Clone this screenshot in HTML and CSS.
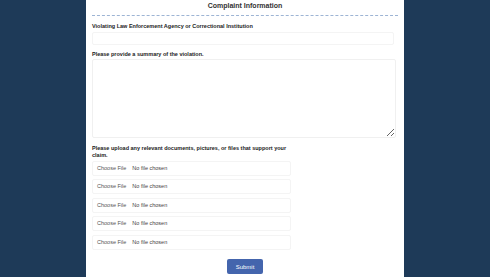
FILE: index.html
```html
<!DOCTYPE html>
<html lang="en">
  <head>
    <meta charset="UTF-8" />
    <meta name="viewport" content="width=device-width, initial-scale=1.0" />
    <title>Complaint Information</title>
    <link rel="stylesheet" href="styles.css">
  </head>
  <body>
    <div class="panel">
      <form id="complaintForm">
        <h3 class="section-title">Complaint Information</h3>

        <div class="field first">
          <label for="agency">Violating Law Enforcement Agency or Correctional Institution</label>
          <input type="text" id="agency" />
        </div>

        <div class="field summary">
          <label for="summary">Please provide a summary of the violation.</label>
          <textarea id="summary"></textarea>
        </div>

        <div class="field uploads">
          <label>Please upload any relevant documents, pictures, or files that support your claim.</label>
          <input type="file" class="file" />
          <input type="file" class="file" />
          <input type="file" class="file" />
          <input type="file" class="file" />
          <input type="file" class="file" />
        </div>

        <div class="actions">
          <button type="submit">Submit</button>
        </div>
      </form>
    </div>
  </body>
</html>
```

FILE: styles.css
```css
body {
  margin: 0;
  font-family: "Liberation Sans", Arial, sans-serif;
  background-color: #1e3a58;
}
.panel {
  width: 306px;
  margin: 0 auto;
  padding: 0 6px 3px;
  background-color: #fff;
  color: #222;
}
.section-title {
  margin: 0;
  padding: 2px 0 5px;
  font-size: 7px;
  line-height: 8px;
  text-align: center;
  color: #333;
  border-bottom: 1px dashed #9db4d4;
}
.field {
  margin-top: 7px;
}
.field label {
  display: block;
  font-size: 5.5px;
  font-weight: bold;
  line-height: 7px;
  margin-bottom: 2px;
}
.summary {
  margin-top: 5.5px;
}
.summary label {
  margin-bottom: 1px;
}
.field input[type="text"] {
  display: block;
  box-sizing: border-box;
  width: 302px;
  height: 13px;
  margin: 0;
  border: 1px solid #f4f4f4;
  border-radius: 2px;
}
.field textarea {
  display: block;
  box-sizing: border-box;
  width: 304px;
  height: 79px;
  border: 1px solid #f0f0f0;
  border-radius: 2px;
}
.uploads {
  width: 200px;
}
.file {
  display: block;
  box-sizing: border-box;
  width: 199px;
  height: 15px;
  margin: 0 0 3.5px;
  padding: 0 2px;
  border: 1px solid #f4f4f4;
  border-radius: 2px;
  font-family: "Liberation Sans", Arial, sans-serif;
  font-size: 5.5px;
  line-height: 13px;
  color: #444;
}
.file::file-selector-button {
  background: none;
  border: none;
  padding: 0 2px;
  margin-right: 4px;
  font-size: 5.5px;
  color: #555;
}
.actions {
  display: flex;
  justify-content: center;
  padding-top: 6px;
}
.actions button {
  width: 36px;
  height: 15px;
  padding: 0;
  background-color: #4465ad;
  color: #fff;
  border: none;
  border-radius: 2px;
  font-family: "Liberation Sans", Arial, sans-serif;
  font-size: 6px;
  cursor: pointer;
}
```
